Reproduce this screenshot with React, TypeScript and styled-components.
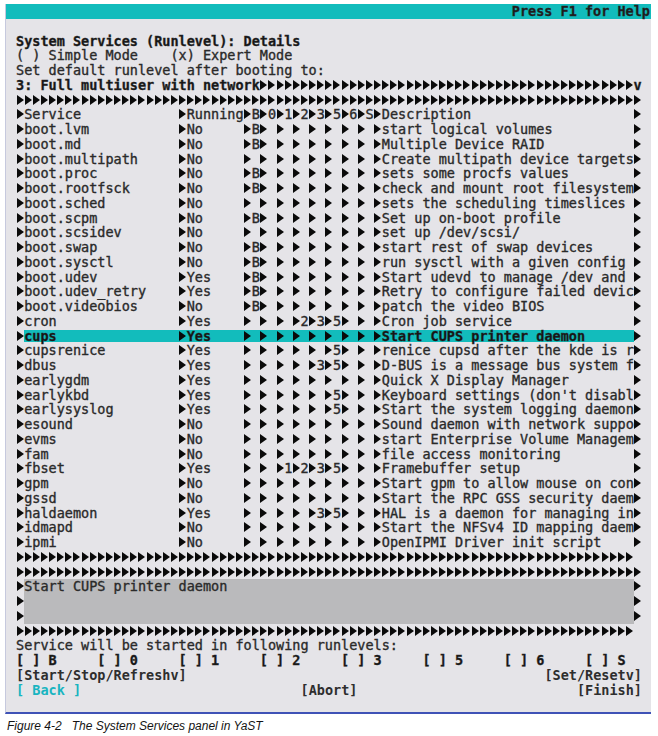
import styled, { createGlobalStyle } from 'styled-components'

const GlobalStyle = createGlobalStyle`
  html, body {
    margin: 0;
    padding: 0;
    background: #ffffff;
  }
`

const ROW = 14.75
const LEVELS = ['B', '0', '1', '2', '3', '5', '6', 'S']

type Service = { name: string; running: string; on: string; desc: string }

const services: Service[] = [
  { name: 'boot.lvm', running: 'No', on: 'B', desc: 'start logical volumes' },
  { name: 'boot.md', running: 'No', on: 'B', desc: 'Multiple Device RAID' },
  { name: 'boot.multipath', running: 'No', on: '', desc: 'Create multipath device targets' },
  { name: 'boot.proc', running: 'No', on: 'B', desc: 'sets some procfs values' },
  { name: 'boot.rootfsck', running: 'No', on: 'B', desc: 'check and mount root filesystem' },
  { name: 'boot.sched', running: 'No', on: '', desc: 'sets the scheduling timeslices' },
  { name: 'boot.scpm', running: 'No', on: 'B', desc: 'Set up on-boot profile' },
  { name: 'boot.scsidev', running: 'No', on: '', desc: 'set up /dev/scsi/' },
  { name: 'boot.swap', running: 'No', on: 'B', desc: 'start rest of swap devices' },
  { name: 'boot.sysctl', running: 'No', on: 'B', desc: 'run sysctl with a given config' },
  { name: 'boot.udev', running: 'Yes', on: 'B', desc: 'Start udevd to manage /dev and' },
  { name: 'boot.udev_retry', running: 'Yes', on: 'B', desc: 'Retry to configure failed devic' },
  { name: 'boot.videobios', running: 'No', on: 'B', desc: 'patch the video BIOS' },
  { name: 'cron', running: 'Yes', on: '235', desc: 'Cron job service' },
  { name: 'cups', running: 'Yes', on: '', desc: 'Start CUPS printer daemon' },
  { name: 'cupsrenice', running: 'Yes', on: '5', desc: 'renice cupsd after the kde is r' },
  { name: 'dbus', running: 'Yes', on: '35', desc: 'D-BUS is a message bus system f' },
  { name: 'earlygdm', running: 'Yes', on: '', desc: 'Quick X Display Manager' },
  { name: 'earlykbd', running: 'Yes', on: '5', desc: "Keyboard settings (don't disabl" },
  { name: 'earlysyslog', running: 'Yes', on: '5', desc: 'Start the system logging daemon' },
  { name: 'esound', running: 'No', on: '', desc: 'Sound daemon with network suppo' },
  { name: 'evms', running: 'No', on: '', desc: 'start Enterprise Volume Managem' },
  { name: 'fam', running: 'No', on: '', desc: 'file access monitoring' },
  { name: 'fbset', running: 'Yes', on: '1235', desc: 'Framebuffer setup' },
  { name: 'gpm', running: 'No', on: '', desc: 'Start gpm to allow mouse on con' },
  { name: 'gssd', running: 'No', on: '', desc: 'Start the RPC GSS security daem' },
  { name: 'haldaemon', running: 'Yes', on: '35', desc: 'HAL is a daemon for managing in' },
  { name: 'idmapd', running: 'No', on: '', desc: 'Start the NFSv4 ID mapping daem' },
  { name: 'ipmi', running: 'No', on: '', desc: 'OpenIPMI Driver init script' },
]

const Page = styled.div`
  width: 658px;
  height: 736px;
  padding: 4px 0 0 5px;
  box-sizing: border-box;
`

const Screen = styled.div`
  width: 646px;
  box-sizing: border-box;
  background: #e5e4e8;
  border-left: 1px solid #c6c9de;
  border-bottom: 2px solid #3f52b6;
  font-family: "DejaVu Sans Mono", monospace;
  font-size: 13.5px;
  line-height: ${ROW}px;
  color: #2a2a2a;
  -webkit-text-stroke: 0.35px #2a2a2a;
`

const HelpBar = styled.div`
  height: ${ROW}px;
  background: #12bcbc;
  text-align: right;
  font-weight: bold;
  color: #1c1c1c;
  padding-right: 1px;
  white-space: pre;
`

const Body = styled.div`
  padding-left: 10px;
  width: 626px;
`

const Line = styled.div<{ $bold?: boolean }>`
  height: ${ROW}px;
  white-space: pre;
  font-weight: ${p => (p.$bold ? 'bold' : 'normal')};
  color: ${p => (p.$bold ? '#161616' : '#2a2a2a')};
`

// the terminal draws its frame characters as solid right-pointing triangles
const Arrow = styled.span`
  display: inline-block;
  position: relative;
  width: 1ch;
  height: ${ROW}px;
  vertical-align: top;
  color: transparent;
  -webkit-text-stroke: 0;
  font-weight: normal;

  &::before {
    content: '';
    position: absolute;
    left: 0.5px;
    top: 2px;
    width: 0;
    height: 0;
    border-left: 7px solid #0a0a0a;
    border-top: 5px solid transparent;
    border-bottom: 5px solid transparent;
  }
`

const Band = styled.span<{ $tone: 'select' | 'box' }>`
  display: inline-block;
  height: ${ROW}px;
  vertical-align: top;
  background: ${p =>
    p.$tone === 'select'
      ? `linear-gradient(transparent 1.5px, #12bcbc 1.5px, #12bcbc 13px, transparent 13px)`
      : '#bababc'};
  font-weight: ${p => (p.$tone === 'select' ? 'bold' : 'normal')};
  color: ${p => (p.$tone === 'select' ? '#141414' : '#2a2a2a')};
`

const ButtonRow = styled.div`
  height: ${ROW}px;
  display: flex;
  justify-content: space-between;
  white-space: pre;
`

const Button = styled.span<{ $accent?: boolean }>`
  font-weight: bold;
  color: ${p => (p.$accent ? '#18b4c0' : '#2e2e2e')};
  -webkit-text-stroke: 0;
`

const Caption = styled.div`
  font-family: "Liberation Sans", Arial, sans-serif;
  font-style: italic;
  font-size: 12px;
  line-height: 14px;
  color: #141414;
  margin-top: 5px;
  padding-left: 2px;
  white-space: pre;
`

function T({ text }: { text: string }) {
  const parts = text.split('▶')
  return (
    <>
      {parts.map((p, i) => (
        <span key={i}>
          {i > 0 && <Arrow>▶</Arrow>}
          {p}
        </span>
      ))}
    </>
  )
}

const fit = (s: string, n: number) => s.slice(0, n).padEnd(n)
const arrows = (n: number) => '▶'.repeat(n)

function rowMiddle(s: Service) {
  const lv = LEVELS.map(l => '▶' + (s.on.includes(l) ? l : ' ')).join('')
  return fit(s.name, 19) + '▶' + fit(s.running, 7) + lv + '▶' + fit(s.desc, 31)
}

function ServiceRow({ s, selected }: { s: Service; selected?: boolean }) {
  if (!selected) {
    return (
      <Line>
        <T text={'▶' + rowMiddle(s) + '▶'} />
      </Line>
    )
  }
  return (
    <Line>
      <Arrow>▶</Arrow>
      <Band $tone="select">
        <T text={rowMiddle(s)} />
      </Band>
      <Arrow>▶</Arrow>
    </Line>
  )
}

function BoxRow({ text }: { text: string }) {
  return (
    <Line>
      <Arrow>▶</Arrow>
      <Band $tone="box">{fit(text, 75)}</Band>
      <Arrow>▶</Arrow>
    </Line>
  )
}

const header =
  '▶' + fit('Service', 19) + '▶Running' + LEVELS.map(l => '▶' + l).join('') + '▶' + fit('Description', 31) + '▶'

const checkboxes = LEVELS.map(l => fit('[ ] ' + l, 10)).join('').trimEnd()

export default function App() {
  return (
    <Page>
      <GlobalStyle />
      <Screen>
        <HelpBar>Press F1 for Help</HelpBar>
        <Body>
          <Line />
          <Line $bold>System Services (Runlevel): Details</Line>
          <Line>( ) Simple Mode    (x) Expert Mode</Line>
          <Line>Set default runlevel after booting to:</Line>
          <Line $bold>
            <T text={'3: Full multiuser with network' + arrows(46)} />
            <span>v</span>
          </Line>
          <Line>
            <T text={arrows(77)} />
          </Line>
          <Line>
            <T text={header} />
          </Line>
          {services.map(s => (
            <ServiceRow key={s.name} s={s} selected={s.name === 'cups'} />
          ))}
          <Line>
            <T text={arrows(76)} />
          </Line>
          <Line>
            <T text={arrows(77)} />
          </Line>
          <BoxRow text="Start CUPS printer daemon" />
          <BoxRow text="" />
          <BoxRow text="" />
          <Line>
            <T text={arrows(76)} />
          </Line>
          <Line>Service will be started in following runlevels:</Line>
          <Line $bold>{checkboxes}</Line>
          <ButtonRow>
            <Button>[Start/Stop/Refreshv]</Button>
            <Button>[Set/Resetv]</Button>
          </ButtonRow>
          <ButtonRow>
            <Button $accent>[ Back ]</Button>
            <Button>[Abort]</Button>
            <Button>[Finish]</Button>
          </ButtonRow>
          <Line />
        </Body>
      </Screen>
      <Caption>Figure 4-2   The System Services panel in YaST</Caption>
    </Page>
  )
}
